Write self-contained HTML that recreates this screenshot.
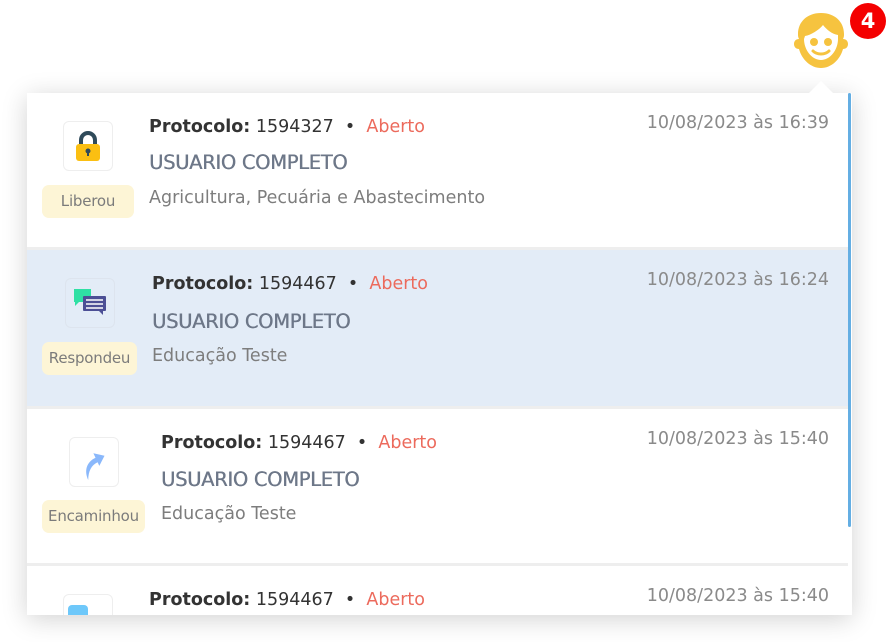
<!DOCTYPE html>
<html><head><meta charset="utf-8"><style>
body{margin:0;width:891px;height:642px;background:#fff;position:relative;overflow:hidden;font-family:"DejaVu Sans",sans-serif}
.panel{position:absolute;left:27px;top:93px;width:825px;height:522px;background:#fff;box-shadow:0 4px 24px rgba(0,0,0,.18);overflow:hidden}
.item{position:absolute;left:0;width:821px;background:#fff}
.sep{position:absolute;left:0;width:821px;height:3px;background:#eeeeee}
.ic{position:absolute;width:48px;height:48px;border:1px solid #eee;border-radius:6px;background:#fff}
.badge{position:absolute;height:33px;line-height:33px;background:#fdf5d6;border-radius:7px;color:#7b7b7b;font-size:15px;text-align:center;letter-spacing:-0.2px}
.t{position:absolute;white-space:nowrap}
.p{font-size:17.5px;color:#333}
.p b{color:#333;font-weight:bold}
.ab{color:#ec6a5c}
.u{font-size:19.5px;color:#6d7788;font-weight:normal;letter-spacing:-0.3px;text-shadow:0.4px 0 0 #6d7788}
.s{font-size:17.5px;color:#7d7d7d}
.d{font-size:17.5px;color:#8a8a8a;right:19px}
</style></head><body>
<svg style="position:absolute;left:790px;top:10px" width="62" height="66" viewBox="0 0 62 66">
<path d="M31 3C17 3 8 12 8 24c0 2 0 3 1 5-3 0-5 2-5 5s2 5 5 5c3 11 12 19 22 19s19-8 22-19c3 0 5-2 5-5s-2-5-5-5c1-2 1-3 1-5C54 12 45 3 31 3z" fill="#f6c33f"/>
<path d="M15 26c6-1 14-6 18-11 4 5 9 9 15 10v4c0 11-8 21-17 21S14 40 14 29z" fill="#fff"/>
<circle cx="24" cy="32" r="4" fill="#f6c33f"/><circle cx="38" cy="32" r="4" fill="#f6c33f"/>
<path d="M23 41c4 4 12 4 16 0" stroke="#f6c33f" stroke-width="3" fill="none" stroke-linecap="round"/>
</svg>
<div style="position:absolute;left:850px;top:3px;width:36px;height:36px;border-radius:50%;background:#f40000;color:#fff;font-weight:bold;font-size:21px;text-align:center;line-height:36px">4</div>
<div style="position:absolute;left:808px;top:81px;width:0;height:0;border-left:13px solid transparent;border-right:13px solid transparent;border-bottom:13px solid #fff;z-index:2"></div>
<div class="panel">
 <div class="item" style="top:0;height:154px">
  <div class="ic" style="left:36px;top:28px"><svg width="48" height="48" viewBox="0 0 48 48"><path d="M17 24v-6a7 7 0 0 1 14 0v6" stroke="#2f4a5a" stroke-width="4" fill="none"/><rect x="12" y="22" width="24" height="17" rx="3" fill="#fbbf12"/><circle cx="24" cy="29" r="2.5" fill="#2f4a5a"/><rect x="23" y="29" width="2" height="5" fill="#2f4a5a"/></svg></div>
  <div class="badge" style="left:15px;top:92px;width:92px">Liberou</div>
  <div class="t p" style="left:122px;top:24px"><b>Protocolo:</b> 1594327 &nbsp;•&nbsp; <span class="ab">Aberto</span></div>
  <div class="t u" style="left:122px;top:58px">USUARIO COMPLETO</div>
  <div class="t s" style="left:122px;top:95px">Agricultura, Pecuária e Abastecimento</div>
  <div class="t d" style="top:20px">10/08/2023 às 16:39</div>
 </div>
 <div class="sep" style="top:154px"></div>
 <div class="item" style="top:157px;height:156px;background:#e3ecf7">
  <div class="ic" style="left:38px;top:28px;background:#e3ecf7;border-color:#dde4ee"><svg width="48" height="48" viewBox="0 0 48 48"><path d="M8 10h17v13H13l-4 4v-4H8z" fill="#2fe0a4"/><rect x="17" y="17" width="23" height="15" rx="1" fill="#4c4f95"/><path d="M33 32l4 4v-4z" fill="#4c4f95"/><path d="M20 21h17M20 25h17M20 29h17" stroke="#fff" stroke-width="1.5"/></svg></div>
  <div class="badge" style="left:15px;top:92px;width:95px">Respondeu</div>
  <div class="t p" style="left:125px;top:24px"><b>Protocolo:</b> 1594467 &nbsp;•&nbsp; <span class="ab">Aberto</span></div>
  <div class="t u" style="left:125px;top:60px">USUARIO COMPLETO</div>
  <div class="t s" style="left:125px;top:96px">Educação Teste</div>
  <div class="t d" style="top:20px">10/08/2023 às 16:24</div>
 </div>
 <div class="sep" style="top:313px"></div>
 <div class="item" style="top:316px;height:154px">
  <div class="ic" style="left:42px;top:28px"><svg width="48" height="48" viewBox="0 0 48 48"><path d="M12 38c0-10 6-17 16-17v-5l9 7-9 7v-4c-7 0-12 4-16 12z" fill="#8ab8fb" transform="rotate(-25 24 26)"/></svg></div>
  <div class="badge" style="left:15px;top:91px;width:103px">Encaminhou</div>
  <div class="t p" style="left:134px;top:24px"><b>Protocolo:</b> 1594467 &nbsp;•&nbsp; <span class="ab">Aberto</span></div>
  <div class="t u" style="left:134px;top:59px">USUARIO COMPLETO</div>
  <div class="t s" style="left:134px;top:95px">Educação Teste</div>
  <div class="t d" style="top:20px">10/08/2023 às 15:40</div>
 </div>
 <div class="sep" style="top:470px"></div>
 <div class="item" style="top:473px;height:60px">
  <div class="ic" style="left:36px;top:28px"><div style="position:absolute;left:4px;top:10px;width:20px;height:20px;background:#6ec8fa;border-radius:4px"></div></div>
  <div class="t p" style="left:122px;top:24px"><b>Protocolo:</b> 1594467 &nbsp;•&nbsp; <span class="ab">Aberto</span></div>
  <div class="t d" style="top:20px">10/08/2023 às 15:40</div>
 </div>
 <div style="position:absolute;left:821px;top:0;width:3px;height:434px;background:#64aee3;border-radius:2px"></div>
</div>
</body></html>
